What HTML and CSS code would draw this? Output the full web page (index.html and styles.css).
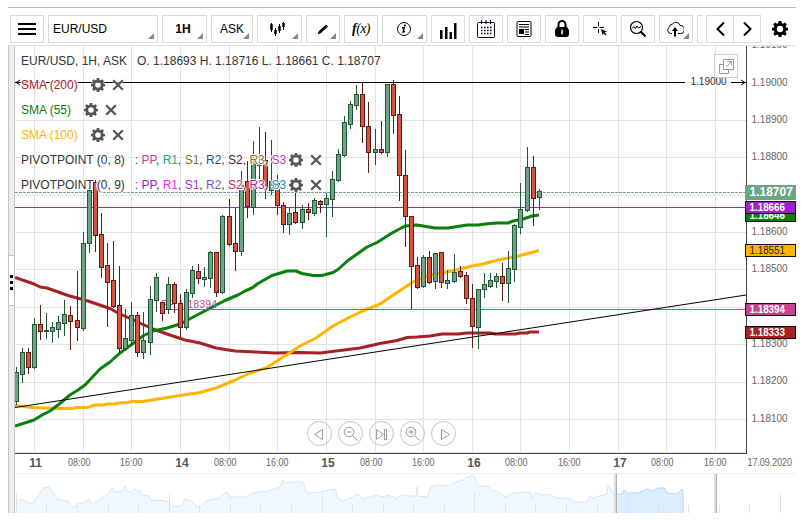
FILE: index.html
```html
<!DOCTYPE html>
<html>
<head>
    <title>EUR/USD Chart</title>
    <meta charset="UTF-8">
    <meta name="viewport" content="width=device-width, initial-scale=1.0">
    <link rel="stylesheet" href="styles.css">
</head>
<body>
    <svg class="defs">
        <defs>
            <symbol id="gear" viewBox="0 0 16 16">
                <path fill-rule="evenodd" d="M6.600 0h2.800l.4 2.200 1.200.5L12.900 1.400l1.900 1.900-1.300 1.900.5 1.200 2 .4v2.600l-2 .4-.5 1.200 1.300 1.900-1.900 1.900-1.900-1.300-1.200.5L9.400 16H6.600l-.4-2-1.200-.5-1.900 1.300-1.900-1.900 1.300-1.900L2 9.800l-2-.4V6.800l2-.4.5-1.200L1.200 3.300l1.900-1.900L5 2.700l1.200-.5zM8 4.800a3.200 3.200 0 1 0 0 6.400 3.200 3.200 0 0 0 0-6.400z"/>
            </symbol>
            <symbol id="cross" viewBox="0 0 12 12">
                <path d="M1.200 1.200l9.600 9.600M10.800 1.200L1.200 10.800" fill="none" stroke="#555" stroke-width="2.200"/>
            </symbol>
        </defs>
    </svg>

    <div class="widget">
        <div class="toolbar">
            <button class="btn">
                <svg width="18" height="12"><path d="M0 1h18M0 6h18M0 11h18" stroke="#000" stroke-width="2"/></svg>
            </button>
            <button class="btn instrument more">EUR/USD</button>
            <button class="btn period more">1H</button>
            <button class="btn side more">ASK</button>
            <button class="btn wide candles more">
                <svg width="16" height="14">
                    <path d="M2.500 1v9M6.500 6v8M10.500 2v9M14.500 0v8" stroke="#000" stroke-width="1"/>
                    <path d="M2.500 2v6M6.500 8v4M10.500 4v5M14.500 1v4" stroke="#000" stroke-width="2.500"/>
                </svg>
            </button>
            <button class="btn more">
                <svg width="14" height="14"><path d="M1.500 12.500l1.500-3.500L10 2.500 12 4.500 5 11z"/></svg>
            </button>
            <button class="btn fx"><i><b>f</b>(x)</i></button>
            <button class="btn wide more">
                <svg width="16" height="16">
                    <circle cx="8" cy="8" r="6.500" fill="none" stroke="#000"/>
                    <path d="M6 7l2.300-.5-1.200 4.600 1.800-.8" fill="none" stroke="#000" stroke-width="1.300"/>
                    <circle cx="8.900" cy="4.500" r="1"/>
                </svg>
            </button>
            <button class="btn bars">
                <svg width="17" height="16"><path d="M0 7h2.500v9H0zM5 4h2.500v12H5zM9.500 9H12v7H9.500zM14 0h2.500v16H14z"/></svg>
            </button>
            <button class="btn">
                <svg width="18" height="18">
                    <rect x=".5" y="2.500" width="17" height="15" rx="1" fill="none" stroke="#102"/>
                    <path d="M4.500 0v4M9 0v4M13.500 0v4" stroke="#000"/>
                    <path d="M4 7.500h11M4 10.500h11M4 13.500h11" stroke="#000" stroke-width="1.500" stroke-dasharray="1.500 1.500"/>
                </svg>
            </button>
            <button class="btn">
                <svg width="16" height="16">
                    <rect x="1" y=".5" width="14" height="15" rx="1" fill="none" stroke="#102"/>
                    <path d="M3 3.500h10M3 6h10M9 8.500h4M9 11h4M9 13.500h4" stroke="#000"/>
                    <path d="M3 8h5v5H3z"/>
                </svg>
            </button>
            <button class="btn">
                <svg width="14" height="18">
                    <path d="M3.500 9V4.500a3.500 3.500 0 0 1 7 0V9" fill="none" stroke="#000" stroke-width="2"/>
                    <path d="M2 7h10l2 3v4q0 3-3 3H3q-3 0-3-3v-4z"/>
                    <path d="M7 9.500v5" stroke="#fff" stroke-width="1.500"/>
                </svg>
            </button>
            <button class="btn">
                <svg width="16" height="16">
                    <path d="M6.500 1v4.500M6.500 8v4M1 6.500h4.500M7.500 6.500H12" stroke="#000"/>
                    <path d="M9 8l6 2.500-2.500.8 2 2.200-1 1-2-2.200L10.500 14z"/>
                </svg>
            </button>
            <button class="btn">
                <svg width="18" height="18">
                    <circle cx="7.500" cy="7.500" r="6" fill="none" stroke="#000" stroke-width="1.200"/>
                    <path d="M3 8.500l2-2 1.500 2L8 6l1.500 2L12 6.500" fill="none" stroke="#000"/>
                    <path d="M11.500 11.500l5 5" stroke="#000" stroke-width="2"/>
                </svg>
            </button>
            <button class="btn cloud more">
                <svg width="18" height="16">
                    <path d="M6 12.500H4.500a3.500 3.500 0 0 1-1-6.500 3 3 0 0 1 3-3 4.200 4.200 0 0 1 7.500 1.500 4 4 0 0 1 .5 8H12" fill="none" stroke="#000"/>
                    <path d="M8 15.500V10H6l3-4 3 4h-2v5.500z"/>
                </svg>
            </button>
            <span class="cut"></span>
            <button class="btn nav prev">
                <svg width="9" height="14"><path d="M8 .5L1.500 7 8 13.500" fill="none" stroke="#000" stroke-width="2"/></svg>
            </button>
            <button class="btn nav next">
                <svg width="9" height="14"><path d="M1 .5L7.500 7 1 13.500" fill="none" stroke="#000" stroke-width="2"/></svg>
            </button>
            <svg class="settings" width="16" height="16"><use href="#gear"/></svg>
        </div>

        <div class="main">
            <div class="sidebar">
                <div class="handle"><span></span><span></span><span></span></div>
            </div>
            <div class="chart">
                <svg id="plot" width="781" height="467" viewBox="15 46 781 467"></svg>

                <div class="legend">
                    <div class="row title">EUR/USD, 1H, ASK<span class="ohlc">O. 1.18693 H. 1.18716 L. 1.18661 C. 1.18707</span></div>
                    <div class="row sma200">SMA (200)<svg class="gear"><use href="#gear"/></svg><svg class="cross"><use href="#cross"/></svg></div>
                    <div class="row sma55">SMA (55)<svg class="gear"><use href="#gear"/></svg><svg class="cross"><use href="#cross"/></svg></div>
                    <div class="row sma100">SMA (100)<svg class="gear"><use href="#gear"/></svg><svg class="cross"><use href="#cross"/></svg></div>
                    <div class="row pivot">PIVOTPOINT (0, 8)<span class="levels">: <i style="color:#c4458f">PP</i>, <i style="color:#1fa768">R1</i>, <i style="color:#8a6a35">S1</i>, <i style="color:#2c479f">R2</i>, <i style="color:#4a2350">S2</i>, <i style="color:#976b31">R3</i>, <i style="color:#c72fc9">S3</i></span><svg class="gear"><use href="#gear"/></svg><svg class="cross"><use href="#cross"/></svg></div>
                    <div class="row pivot">PIVOTPOINT (0, 9)<span class="levels">: <i style="color:#a21fd0">PP</i>, <i style="color:#f02be0">R1</i>, <i style="color:#a532d2">S1</i>, <i style="color:#7458cf">R2</i>, <i style="color:#c01c63">S2</i>, <i style="color:#a41fb4">R3</i>, <i style="color:#1f8cba">S3</i></span><svg class="gear"><use href="#gear"/></svg><svg class="cross"><use href="#cross"/></svg></div>
                </div>

                <div class="popout">
                    <svg width="15" height="15" fill="none" stroke="#999">
                        <path d="M4.500 5.500h-4v9h9v-4"/>
                        <path d="M4.500.5h10v10h-10z"/>
                        <path d="M7 8l5-5M8.500 2.500h4v4"/>
                    </svg>
                </div>

                <div class="controls">
                    <span><svg><path d="M11.500 4.500v10L3.500 9.500z"/></svg></span>
                    <span><svg><circle cx="7" cy="7" r="4.800"/><path d="M4.500 7h5M10.500 10.500l5 5"/></svg></span>
                    <span><svg><path d="M3.500 4.500v10l7-5zM11.500 4.500h2v10h-2z"/></svg></span>
                    <span><svg><circle cx="7" cy="7" r="4.800"/><path d="M4.500 7h5M7 4.500v5M10.500 10.500l5 5"/></svg></span>
                    <span><svg><path d="M6.500 4.500v10l8-5z"/></svg></span>
                </div>
            </div>
        </div>
    </div>

    <script src="chart.js"></script>
</body>
</html>
```

FILE: styles.css
```css
body {
    margin: 0;
    background-color: white;
    font-family: "Liberation Sans", Arial, sans-serif;
    overflow: hidden;
}

.defs {
    display: none;
}

.widget {
    width: 788px;
    margin: 7px 0 0 8px;
    border-top: 1px solid #bbb;
}

.toolbar {
    display: flex;
    gap: 4px;
    height: 38px;
    padding: 7px 0 0 2px;
    box-sizing: border-box;
    border-bottom: 1px solid #ddd;
}

.btn {
    position: relative;
    display: flex;
    align-items: center;
    justify-content: center;
    flex: none;
    width: 34px;
    height: 28px;
    padding: 0;
    box-sizing: border-box;
    border: 1px solid #d9d9d9;
    background-color: white;
    color: #000;
    font-family: "Liberation Sans", Arial, sans-serif;
    font-size: 12px;
}

.more::after {
    content: "";
    position: absolute;
    right: 3px;
    bottom: 3px;
    border-left: 6px solid transparent;
    border-bottom: 6px solid #888;
}

.instrument {
    width: 110px;
    justify-content: flex-start;
    padding-left: 4px;
}

.period {
    width: 45px;
    font-weight: bold;
    padding-right: 3px;
}

.side {
    width: 42px;
}

.wide {
    width: 45px;
    padding-right: 2px;
}

.candles {
    padding-right: 5px;
}

.fx {
    font-family: "Liberation Serif", "Times New Roman", serif;
    font-size: 14px;
    letter-spacing: -0.6px;
}

.bars {
    padding-top: 3px;
}

.cloud {
    padding-right: 2px;
}

.cut {
    flex: none;
    width: 6px;
    height: 28px;
    margin-right: -1px;
    box-sizing: border-box;
    border: 1px solid #d9d9d9;
    border-right: none;
}

.nav {
    width: 28px;
}

.next {
    margin-left: -5px;
}

.settings {
    margin: 6px 0 0 7px;
}

.main {
    display: flex;
    height: 467px;
}

.sidebar {
    width: 7px;
    box-sizing: border-box;
    border-left: 1px solid #c4c4c4;
    border-right: 1px solid #c4c4c4;
    background-color: #eee;
    padding-top: 209px;
}

.handle {
    display: flex;
    flex-direction: column;
    align-items: center;
    justify-content: center;
    gap: 3px;
    height: 51px;
    box-sizing: border-box;
    padding-top: 3px;
    border-top: 1px solid #c4c4c4;
    border-bottom: 1px solid #c4c4c4;
    background-color: white;
}

.handle span {
    width: 3px;
    height: 3px;
    background-color: #000;
}

.chart {
    position: relative;
    width: 781px;
}

.chart > svg {
    display: block;
}

.axis {
    font-size: 10px;
    fill: #666;
}

.day {
    font-size: 12px;
    font-weight: bold;
    fill: #555;
}

.legend {
    position: absolute;
    left: 6px;
    top: 2px;
    font-size: 12px;
    color: #333;
    text-shadow: 1px 0 1px white, -1px 0 1px white, 0 1px 1px white, 0 -1px 1px white, 1px 1px 0 white, -1px -1px 0 white;
}

.row {
    display: flex;
    align-items: center;
    height: 25px;
    white-space: pre;
}

.row i {
    font-style: normal;
}

.title {
    margin-bottom: -1px;
}

.ohlc {
    margin-left: 10px;
}

.levels {
    margin-left: 10px;
}

.gear {
    width: 14px;
    height: 14px;
    margin-left: 13px;
    fill: #555;
    overflow: visible;
}

.gear use,
.cross use {
    filter: drop-shadow(0 0 1px white);
}

.cross {
    width: 12px;
    height: 12px;
    margin-left: 7px;
}

.pivot .gear {
    margin-left: 3px;
}

.sma200 {
    color: #a52125;
}

.sma55 {
    color: #0a800a;
}

.sma100 {
    color: #ffb400;
}

.popout {
    position: absolute;
    left: 699px;
    top: 8px;
    display: flex;
    align-items: center;
    justify-content: center;
    width: 24px;
    height: 24px;
    box-sizing: border-box;
    border: 1px solid #ccc;
    background-color: rgba(255, 255, 255, 0.7);
}

.controls {
    position: absolute;
    left: 292px;
    top: 375px;
    display: flex;
    gap: 6px;
}

.controls span {
    display: flex;
    align-items: center;
    justify-content: center;
    width: 25px;
    height: 25px;
    box-sizing: border-box;
    border: 1px solid #c4c4c4;
    border-radius: 50%;
}

.controls svg {
    width: 18px;
    height: 18px;
    fill: none;
    stroke: #999;
}
```

FILE: chart.js
```js
const plot = document.getElementById('plot');

// high, body top, body bottom, low, direction (1 = up)
const candles = [
    [367,372,402,404,1],[348,352,375,382,1],[348,352,368,373,0],[318,324,368,368,1],
    [305,324,332,339,0],[313,330,332,338,1],[322,327,332,342,1],[316,322,330,337,1],
    [300,314,324,335,1],[306,315,322,349,0],[271,320,328,340,0],[232,243,329,330,1],
    [182,190,244,252,1],[180,182,236,251,0],[213,234,268,277,0],[243,265,283,326,0],
    [241,280,307,307,0],[266,305,349,352,0],[309,338,349,350,1],[302,315,341,345,1],
    [312,315,353,356,0],[312,340,353,358,1],[286,299,343,354,1],[273,277,301,311,1],
    [302,302,314,320,0],[277,284,310,313,1],[282,284,304,312,0],[294,303,328,336,0],
    [289,292,328,329,1],[266,270,294,297,1],[264,271,279,283,0],[267,277,280,286,1],
    [251,252,279,287,1],[252,252,293,296,0],[215,216,293,293,1],[199,216,245,245,0],
    [208,243,252,270,0],[171,185,252,255,1],[161,181,207,217,0],[141,160,208,214,1],
    [127,163,166,178,1],[132,160,190,198,0],[140,181,191,194,1],[175,183,206,214,0],
    [202,205,225,232,0],[208,213,225,234,1],[193,212,223,223,0],[205,209,223,228,1],
    [203,209,213,219,0],[198,200,214,215,1],[200,201,205,212,0],[193,198,205,236,1],
    [171,179,200,216,1],[149,154,181,181,1],[116,122,156,156,1],[101,104,125,128,1],
    [85,94,106,109,1],[83,94,127,142,0],[102,126,153,172,0],[129,149,153,164,1],
    [121,149,153,153,0],[84,84,153,156,1],[80,84,116,133,0],[96,114,176,200,0],
    [150,175,217,246,0],[216,216,267,308,0],[257,265,288,288,0],[255,257,287,287,1],
    [251,257,283,283,0],[253,253,282,288,1],[252,252,283,287,0],[270,280,284,288,1],
    [254,272,282,282,1],[266,271,277,277,0],[272,275,299,303,0],[284,298,327,347,0],
    [289,289,328,348,1],[273,284,290,297,1],[273,280,287,287,1],[273,276,282,287,1],
    [263,276,284,300,0],[251,268,284,302,1],[224,225,270,281,1],[183,209,228,233,1],
    [147,167,211,211,1],[156,167,199,225,0],[189,191,198,209,1]
];

const sma200 = '15,277.5 34,284 40,287 47,288 68,295.5 88,301 110,308.5 118,313 153,329 167,334 185,340 200,343 216,348 235,351 255,352 275,353 300,352.5 320,353 340,350.5 360,348 380,343.5 397,340.5 407,337.5 417,337 430,336 442,334 458,334 467,333 490,333 495,334 515,334 520,333 527,333 530,332 539,332';
const sma55 = '15,426 34,420 43,414.5 50,411 58,405 70,395 78,390 85,385 100,369 110,362 120,353 133,343.5 143,336 153,331 167,328 180,324 200,313.5 225,300.5 238,295 245,291 252,288 258,283.5 272,275.5 287,271 296,271 302,273.5 313,275.5 322,275.5 333,272.5 338,269.5 348,260.5 367,247 377,242.5 392,233 405,226 417,225 435,228 448,228 467,225 478,225 485,224 497,223 508,223 513,221 523,219 532,216 539,215';
const sma100 = '15,405.5 32,407.5 60,408.5 72,408.5 77,407.5 87,407.5 95,405 103,405 107,404 115,404 118,403 128,402.5 132,401.5 142,401.5 152,400 180,395.5 200,392.5 216,388 235,380 250,373 266,368 280,359 300,346 316,338 333,326 350,317 365,310 380,304 388,298.5 412,282.5 423,277.5 433,274.5 447,272 462,268.5 472,266 483,264 490,262 505,258.5 515,257 522,255 539,250.5';

const history = '17,502 20,499 25,501 33,504 35,500 37,497 40,493 43,488 49,487 52,492 54,493 57,499 65,501 69,502 71,506 73,508 78,503 83,503 89,499 92,505 95,502 100,500 103,497 107,495 112,488 115,492 122,491 125,486 127,491 133,493 134,489 140,491 143,496 148,495 152,501 157,500 165,501 169,502 173,506 182,506 185,499 191,501 195,505 200,508 205,502 212,499 218,499 222,495 227,492 230,497 245,497 253,493 267,491 271,490 280,487 283,480 285,483 292,482 303,482 307,493 313,493 335,489 339,499 343,501 350,498 358,494 363,499 370,497 377,495 383,497 387,495 397,498 402,495 407,496 416,496 417,487 418,496 427,497 430,488 435,485 450,486 455,482 463,480 467,477 474,475 476,481 479,486 487,486 492,490 498,492 506,497 513,493 530,492 532,498 535,493 542,495 548,494 557,498 567,498 577,502 587,502 589,496 593,498 607,494 608,485 611,489 614,495';
const selected = '617,494 622,494 624,490 627,493 638,493 647,489 652,491 658,488 664,488 667,493 677,494 682,489 683,492';

function rect(x, y, w, h, fill, extra = '') {
    return `<rect x="${x}" y="${y}" width="${w}" height="${h}" fill="${fill}" ${extra}/>`;
}

function text(x, y, str, cls, extra = '') {
    return `<text x="${x}" y="${y}" class="${cls}" ${extra}>${str}</text>`;
}

function drawGrid() {
    let out = '';
    [34, 83, 131, 180, 229, 277, 326, 375, 423, 472, 520, 569, 618, 666, 715].forEach(x => {
        out += rect(x, 46, 1, 407, '#e3e3e3');
    });
    [82, 120, 157, 195, 232, 269, 307, 344, 382, 419, 452].forEach(y => {
        out += rect(15, y, 731, 1, '#e3e3e3');
    });
    return out;
}

function drawCandles() {
    return candles.map(([high, top, bottom, low, up], i) => {
        const x = Math.floor(16.24 + 6.081 * i);
        const line = up ? '#225437' : '#5b1a13';
        const fill = up ? '#6ba583' : '#d75442';
        return rect(x, high, 1, low - high + 1, line)
            + rect(x - 2, top, 5, Math.max(bottom - top, 1), line)
            + rect(x - 1, top + 1, 3, Math.max(bottom - top - 2, 0), fill);
    }).join('');
}

function drawLine(points, color) {
    return `<polyline points="${points}" fill="none" stroke="${color}" stroke-width="3" stroke-linejoin="round"/>`;
}

function drawLevels() {
    return rect(15, 207, 731, 1, '#a11fcf')
        + rect(161, 309, 585, 1, '#c4458f')
        + text(161, 308, 'PP 1.18394', 'axis', 'style="fill:#c4458f" textLength="56"')
        + '<path d="M15 192.5h731" stroke="#6ba583" stroke-dasharray="3 1"/>'
        + '<path d="M15 407.5L746 295" stroke="#000"/>'
        + rect(15, 82, 670, 1, '#000') + rect(731, 82, 15, 1, '#000')
        + '<path d="M20 80l-4 2.5 4 2.5M741 80l4 2.5-4 2.5" fill="none" stroke="#000"/>'
        + text(690.5, 85, '1.19000', 'axis', 'style="fill:#333"');
}

function drawAxes() {
    let out = rect(746, 46, 1, 408, '#444') + rect(15, 453, 732, 1, '#444');
    const prices = { '1.19100': 48, '1.19000': 86, '1.18900': 123, '1.18800': 160, '1.18600': 235, '1.18500': 272, '1.18300': 347, '1.18200': 384, '1.18100': 422 };
    for (const p in prices) {
        out += text(751.5, prices[p], p, 'axis');
    }
    [[79, '08:00'], [131, '16:00'], [225, '08:00'], [277, '16:00'], [371, '08:00'], [423, '16:00'], [516, '08:00'], [569, '16:00'], [662, '08:00'], [715, '16:00']].forEach(([x, t]) => {
        out += text(x - 11, 466, t, 'axis', 'textLength="22.5" lengthAdjust="spacingAndGlyphs"');
    });
    [[35.5, 11], [182, 14], [328, 15], [474, 16], [620, 17]].forEach(([x, t]) => {
        out += text(x, 467, t, 'day', 'text-anchor="middle"');
    });
    return out + text(747.5, 466, '17.09.2020', 'axis', 'textLength="44.5" lengthAdjust="spacingAndGlyphs"');
}

function drawTag(y, price, color, ink = '#fff', weight = 'bold') {
    return rect(745.5, y + 0.5, 50, 12, color, 'stroke="#111"')
        + text(749.5, y + 10, price, '', `font-size="10" font-weight="${weight}" fill="${ink}" textLength="35.5" lengthAdjust="spacingAndGlyphs"`);
}

function drawTags() {
    return drawTag(209, '1.18646', '#0a800a')
        + drawTag(201, '1.18666', '#a11fcf')
        + drawTag(244, '1.18551', '#ffb400', '#222', 'normal')
        + drawTag(303, '1.18394', '#c4458f')
        + drawTag(326, '1.18333', '#a52125')
        + rect(745, 185, 51, 15, '#6ba583')
        + text(749.5, 196, '1.18707', '', 'font-size="12" font-weight="bold" fill="#fff"');
}

function drawNavigator() {
    let out = rect(15, 473, 781, 1, '#eee');
    out += `<polygon points="17,513 ${history} 614,513" fill="#eff7ff"/><polyline points="${history}" fill="none" stroke="#d6e6fd"/>`;
    out += `<polygon points="617,513 ${selected} 683,513" fill="#dcedff"/><polyline points="${selected} 683,513" fill="none" stroke="#b5d5fb"/>`;
    for (let i = 0; i < 26; i++) {
        const y = i % 5 ? 505 : 493;
        out += rect(Math.floor(16.3 + 30.57 * i), y, 1, 513 - y, '#dfe2e6');
    }
    [614, 714].forEach(x => {
        out += rect(x, 474, 2, 39, '#ddd') + rect(x + 2, 474, 1, 39, '#b0b0b0');
    });
    return out;
}

plot.innerHTML = drawGrid()
    + drawLine(sma200, '#a52125')
    + drawLine(sma100, '#ffb400')
    + drawLine(sma55, '#0a800a')
    + drawLevels()
    + drawCandles()
    + drawAxes()
    + drawTags()
    + drawNavigator();
```
